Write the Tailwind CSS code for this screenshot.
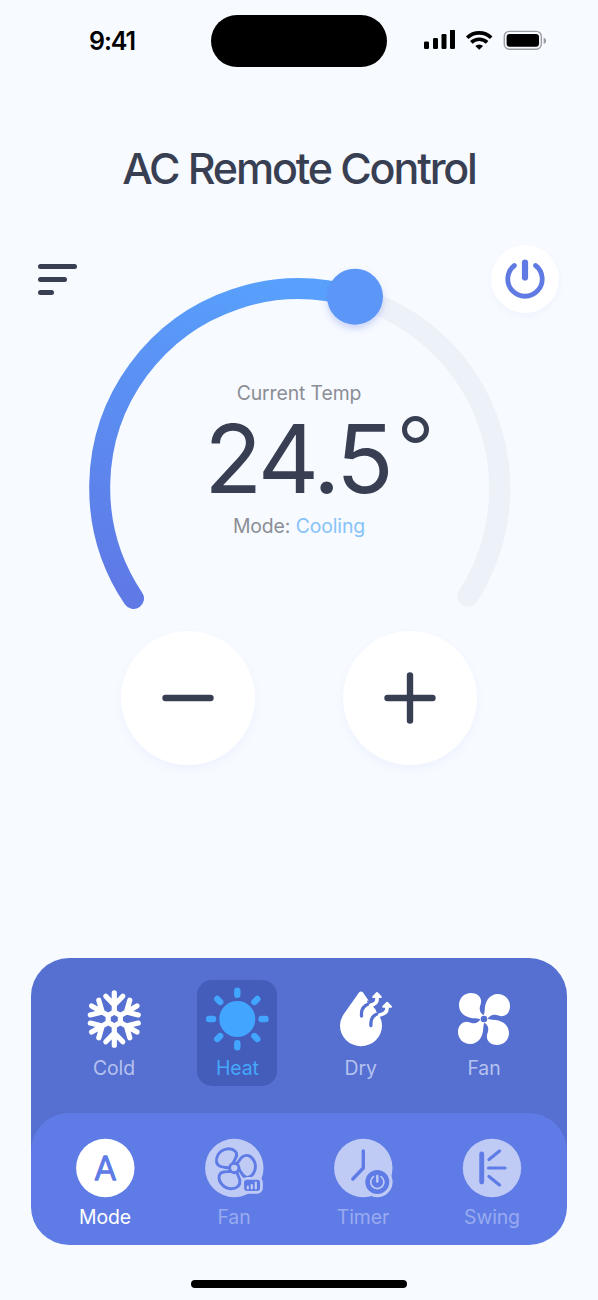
<!DOCTYPE html>
<html lang="en">
<head>
<meta charset="utf-8">
<title>AC Remote Control</title>
<script src="https://cdn.jsdelivr.net/npm/@tailwindcss/browser@4"></script>
</head>
<body class="bg-[#f7faff]">
<main class="relative flex h-[1300px] w-[598px] flex-col overflow-hidden bg-[#f7faff] font-['Inter',sans-serif] text-[#393f52]">

  <!-- Status bar -->
  <header class="flex h-[82px] shrink-0 items-center">
    <div class="w-[211px] pl-[89px] text-[25px] leading-none font-semibold tracking-[-1.1px] text-black">9:41</div>
    <div class="h-[52px] w-[176px] rounded-full bg-black"></div>
    <div class="flex items-center pl-[37px]">
      <svg class="h-[22px] w-[124px]" viewBox="0 0 124 22">
        <rect x="0" y="11.500" width="5" height="7.500" rx="1.300"/>
        <rect x="9" y="8" width="5" height="11" rx="1.300"/>
        <rect x="17.500" y="4" width="5" height="15" rx="1.300"/>
        <rect x="26" y="-.5" width="5" height="19.500" rx="1.300"/>
        <g transform="translate(0 -.8)">
          <g fill="none" stroke="#000" stroke-width="3.600">
            <path d="M43.2 8.600a17.200 17.200 0 0 1 24 0"/>
            <path d="M47.3 13.200a11.300 11.300 0 0 1 15.800 0"/>
          </g>
          <path d="M51.300 16.800a5.600 5.600 0 0 1 7.800 0L55.200 20.600z"/>
          <rect x="80.300" y="2.200" width="37" height="17.800" rx="5" fill="none" stroke="#9b9da0" stroke-width="1.400"/>
          <rect x="82.600" y="4.700" width="32.400" height="12.800" rx="3"/>
          <path d="M119.600 8.200a3.400 3.400 0 0 1 0 6.600z" fill="#9b9da0"/>
        </g>
      </svg>
    </div>
  </header>

  <h1 class="mt-[59px] h-[54px] text-center text-[43px] leading-[54px] font-medium tracking-[-2.15px]">AC Remote Control</h1>

  <!-- Menu and power -->
  <div class="mt-[49px] flex h-[69px] shrink-0 items-center justify-between pr-[39px] pl-[38px]">
    <div class="mt-[2px] flex flex-col gap-[8px]">
      <span class="h-[5px] w-[39px] rounded-full bg-[#393f52]"></span>
      <span class="h-[5px] w-[29px] rounded-full bg-[#393f52]"></span>
      <span class="h-[5px] w-[16px] rounded-full bg-[#393f52]"></span>
    </div>
    <div class="flex size-[68px] items-center justify-center rounded-full bg-white shadow-[0_3px_6px_rgba(95,124,230,0.05)]">
      <svg class="size-[44px]" viewBox="-22 -22 44 44" fill="none" stroke="#5f7ae3" stroke-linecap="round">
        <path d="M10.600-13.500a17.200 17.200 0 1 1-21.200 0" stroke-width="4.800"/>
        <path d="M0-16.500V-1.500" stroke-width="6.200"/>
      </svg>
    </div>
  </div>

  <!-- Temperature dial -->
  <section class="-mt-[53px] grid h-[361px] shrink-0 justify-center">
    <svg class="col-start-1 row-start-1 h-[360px] w-[440px]" viewBox="79 260 440 360" fill="none">
      <defs>
        <linearGradient id="cool" gradientUnits="userSpaceOnUse" x1="260" y1="280" x2="150" y2="605">
          <stop offset="0" stop-color="#58a0fc"/>
          <stop offset="1" stop-color="#5f79e5"/>
        </linearGradient>
        <filter id="lift" x="-40%" y="-40%" width="180%" height="190%">
          <feDropShadow dx="0" dy="4" stdDeviation="3.500" flood-color="#5f7ce6" flood-opacity=".3"/>
        </filter>
      </defs>
      <path d="M355 297A198.800 198.800 0 0 1 468 596" stroke="#edf1f8" stroke-width="21" stroke-linecap="round"/>
      <path d="M133.500 598.500A198.800 198.800 0 0 1 355 297" stroke="url(#cool)" stroke-width="21" stroke-linecap="round"/>
      <circle cx="355" cy="296.700" r="28" fill="#5b97f8" filter="url(#lift)"/>
    </svg>
    <div class="col-start-1 row-start-1 flex flex-col items-center pt-[121px] text-[19.4px] leading-[24px] text-[#8b8e96]">
      <p class="tracking-[-0.1px]">Current Temp</p>
      <div class="flex h-[109px] items-start pl-[35px] text-[#393f52]">
        <span class="pt-[2px] text-[95px] leading-[104px] tracking-[-3px]">24.5</span>
        <span class="mt-[11px] ml-[11px] size-[27px] rounded-full border-5 border-[#393f52]"></span>
      </div>
      <p class="tracking-[-0.1px]">Mode: <span class="text-[#86c3f9]">Cooling</span></p>
    </div>
  </section>

  <!-- Temperature buttons -->
  <div class="mt-[10px] flex h-[135px] shrink-0 justify-center gap-[88px]">
    <div class="flex size-[134px] items-center justify-center rounded-full bg-white shadow-[0_4px_8px_rgba(95,124,230,0.06)]">
      <svg class="size-[56px]" viewBox="-28 -28 56 56" stroke="#393f52" stroke-width="6.400" stroke-linecap="round"><path d="M-22.500 0h45"/></svg>
    </div>
    <div class="flex size-[134px] items-center justify-center rounded-full bg-white shadow-[0_4px_8px_rgba(95,124,230,0.06)]">
      <svg class="size-[56px]" viewBox="-28 -28 56 56" stroke="#393f52" stroke-width="6.400" stroke-linecap="round"><path d="M-22.500 0h45M0-22.500v45"/></svg>
    </div>
  </div>

  <!-- Control panel -->
  <section class="mx-[31px] mt-[192px] flex h-[287px] shrink-0 flex-col rounded-[38px] bg-[linear-gradient(#5570d0_194px,transparent_194px)]">
    <div class="flex h-[155px] shrink-0 items-start justify-between px-[43px] pt-[22px] text-[19.4px] tracking-[-0.1px] text-[#b5c1ef]">
      <div class="flex h-[106px] w-[80px] flex-col items-center pt-[4px]">
        <svg class="size-[70px]" viewBox="-35.3 -35 70 70" fill="none" stroke="#fff" stroke-width="5.200" stroke-linecap="round" stroke-linejoin="round">
          <defs>
            <g id="arm"><path d="M0-7V-26.200M-8.500-22.800L0-14L8.500-22.800"/></g>
          </defs>
          <path d="M0-7L6.100-3.500V3.500L0 7L-6.100 3.500V-3.500Z"/>
          <use href="#arm"/><use href="#arm" transform="rotate(60)"/><use href="#arm" transform="rotate(120)"/>
          <use href="#arm" transform="rotate(180)"/><use href="#arm" transform="rotate(240)"/><use href="#arm" transform="rotate(300)"/>
        </svg>
        <p class="leading-[28px]">Cold</p>
      </div>
      <div class="flex h-[106px] w-[80px] flex-col items-center rounded-[15px] bg-[#445dba] pt-[4px] text-[#46a8fb]">
        <svg class="size-[70px]" viewBox="-35.3 -35 70 70" stroke="#42a5ff" stroke-width="6.400" stroke-linecap="round">
          <circle r="18" fill="#42a5ff" stroke="none"/>
          <path d="M0-24.200V-28.200M0 24.200V28.200M-24.200 0H-28.200M24.200 0H28.200M-17.100-17.100L-20-20M17.100-17.100L20-20M-17.100 17.100L-20 20M17.100 17.100L20 20"/>
        </svg>
        <p class="leading-[28px]">Heat</p>
      </div>
      <div class="flex h-[106px] w-[80px] flex-col items-center pt-[4px]">
        <svg class="size-[70px]" viewBox="-4.700 -1 70 70" fill="none" stroke-linecap="round" stroke-linejoin="round">
          <path d="M28.300 7.600Q30.300 5.400 32.300 7.600L37.800 15.500L45.500 25.500Q51.300 33.500 51.300 40.500A21 20.700 0 0 1 9.300 40.500Q9.300 34.500 13.500 28.500Z" fill="#fff"/>
          <path d="M36.500 16.500L42 17M45.500 25.500L52 27" stroke="#5570d0" stroke-width="2" stroke-linecap="butt"/>
          <path d="M30.800 31V28.500C30.800 23.500 33.500 20.500 38.500 18.800" stroke="#5570d0" stroke-width="3.300"/>
          <path d="M40.200 40.500V38C40.200 33 43 30 48 28.300" stroke="#5570d0" stroke-width="3.300"/>
          <path d="M40 20.300C44 19.500 46.300 18 46.300 14.500V11" stroke="#fff" stroke-width="3.700"/>
          <path d="M49 30C53.500 29 56.200 27.500 56.200 24V20" stroke="#fff" stroke-width="3.700"/>
          <path d="M42.500 12L46.300 8L50.100 12ZM52.500 21.800L56.400 17.800L60.300 21.800Z" fill="#fff" stroke="#fff" stroke-width="2"/>
        </svg>
        <p class="leading-[28px]">Dry</p>
      </div>
      <div class="flex h-[106px] w-[80px] flex-col items-center pt-[4px]">
        <svg class="size-[70px]" viewBox="-35 -35 70 70" fill="#fff">
          <defs>
            <path id="blade" d="M.500-3C-2.500-5-4.800-7.500-4.200-11.500C-3.600-14.500-2.700-15.500-2.900-18.500C-3.400-23-7.500-26-13-26C-20-26-25-20.500-25-14C-25-5-17-.800-8.500-.700C-6-.500-4 0-3 1L0 2Z"/>
          </defs>
          <use href="#blade"/><use href="#blade" transform="rotate(90)"/><use href="#blade" transform="rotate(180)"/><use href="#blade" transform="rotate(270)"/>
          <circle r="3.300" fill="#5570d0"/>
        </svg>
        <p class="leading-[28px]">Fan</p>
      </div>
    </div>

    <div class="flex h-[132px] shrink-0 items-start justify-between rounded-[38px] bg-[#5f7ce6] pt-[20px] pr-[35px] pl-[34px] text-[19.4px] tracking-[-0.1px] text-[#99aaf0]">
      <div class="flex w-[80px] flex-col items-center text-white">
        <svg class="size-[70px]" viewBox="-35.3 -35 70 70">
          <circle r="29.200" fill="#fff"/>
          <text y="12" text-anchor="middle" font-family="Inter" font-size="33" font-weight="300" fill="#5f7ce6" stroke="#5f7ce6" stroke-width="1.500" stroke-linejoin="round">A</text>
        </svg>
        <p class="leading-[28px]">Mode</p>
      </div>
      <div class="flex w-[80px] flex-col items-center">
        <svg class="size-[70px]" viewBox="-35.3 -35 70 70" fill="none" stroke="#5f7ce6">
          <defs>
            <path id="vane" d="M-3.500 3.500C-8 4-13.500 2.500-15 7.500C-16.500 14-10 20.700-3.500 20.700C2.500 20.700 6.300 17.500 5.500 12.500C5 9.500 3.500 7.500 2.500 4"/>
          </defs>
          <g fill="#bfcaf5" stroke="none"><circle r="29.200"/></g>
          <g stroke-width="2.900" stroke-linecap="round">
            <use href="#vane"/><use href="#vane" transform="rotate(120)"/><use href="#vane" transform="rotate(240)"/>
            <circle r="4.700"/>
          </g>
          <rect x="9.800" y="11.700" width="16" height="11.300" rx="3" fill="#5f7ce6" stroke="#bfcaf5" stroke-width="5.500"/>
          <rect x="9.800" y="11.700" width="16" height="11.300" rx="3" fill="#5f7ce6" stroke="none"/>
          <path d="M13.500 20.500V18.700M17.500 20.500V17M21.500 20.500V14.500" stroke="#bfcaf5" stroke-width="2.200" stroke-linecap="round"/>
        </svg>
        <p class="leading-[28px]">Fan</p>
      </div>
      <div class="flex w-[80px] flex-col items-center">
        <svg class="size-[70px]" viewBox="-35.3 -35 70 70" fill="none" stroke="#5f7ce6" stroke-linecap="round" stroke-linejoin="round">
          <g fill="#bfcaf5" stroke="none"><circle r="29.200"/><circle cx="14" cy="14" r="15.200"/></g>
          <path d="M0-17V0L-10.500 11" stroke-width="3.400"/>
          <circle cx="14" cy="14" r="13.500" fill="#5f7ce6" stroke="#bfcaf5" stroke-width="3"/>
          <g stroke="#bfcaf5"><path d="M17.800 8.600a6.600 6.600 0 1 1-7.600 0" stroke-width="1.700"/><path d="M14 8v5.500" stroke-width="2.400"/></g>
        </svg>
        <p class="leading-[28px]">Timer</p>
      </div>
      <div class="flex w-[80px] flex-col items-center">
        <svg class="size-[70px]" viewBox="-35 -35 70 70" stroke="#5f7ce6" stroke-linecap="round">
          <circle r="29.200" fill="#bfcaf5" stroke="none"/>
          <path d="M-10.300-14V14" stroke-width="4.900"/>
          <path d="M-3-8.500L7.500-17M-3.500 0H13M-3 8.500L7.500 17" stroke-width="3.200"/>
        </svg>
        <p class="leading-[28px]">Swing</p>
      </div>
    </div>
  </section>

  <div class="mt-[35px] h-[8px] w-[216px] shrink-0 self-center rounded-full bg-black"></div>
</main>
</body>
</html>
